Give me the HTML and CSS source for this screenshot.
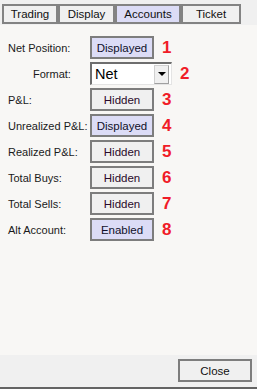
FILE: index.html
```html
<!DOCTYPE html>
<html lang="en">
<head>
  <meta charset="UTF-8">
  <title>Account Settings</title>
  <meta name="viewport" content="width=device-width, initial-scale=1.0">
  <link rel="stylesheet" href="styles.css">
</head>
<body>

  <div class="tabs">
    <div class="tab tab-trading">Trading</div>
    <div class="tab tab-display">Display</div>
    <div class="tab tab-accounts active">Accounts</div>
    <div class="tab tab-ticket">Ticket</div>
  </div>

  <div class="content">
    <div class="row">
      <span class="label">Net Position:</span>
      <button class="toggle on">Displayed</button>
      <span class="num">1</span>
    </div>

    <div class="row">
      <span class="label sub">Format:</span>
      <div class="select">
        <span class="select-value">Net</span>
        <span class="select-arrow"><span class="tri"></span></span>
      </div>
      <span class="num">2</span>
    </div>

    <div class="row">
      <span class="label">P&amp;L:</span>
      <button class="toggle">Hidden</button>
      <span class="num">3</span>
    </div>

    <div class="row">
      <span class="label">Unrealized P&amp;L:</span>
      <button class="toggle on">Displayed</button>
      <span class="num">4</span>
    </div>

    <div class="row">
      <span class="label">Realized P&amp;L:</span>
      <button class="toggle">Hidden</button>
      <span class="num">5</span>
    </div>

    <div class="row">
      <span class="label">Total Buys:</span>
      <button class="toggle">Hidden</button>
      <span class="num">6</span>
    </div>

    <div class="row">
      <span class="label">Total Sells:</span>
      <button class="toggle">Hidden</button>
      <span class="num">7</span>
    </div>

    <div class="row">
      <span class="label">Alt Account:</span>
      <button class="toggle on">Enabled</button>
      <span class="num">8</span>
    </div>
  </div>

  <div class="footer">
    <button class="close-btn">Close</button>
  </div>

</body>
</html>
```

FILE: styles.css
```css
* { box-sizing: border-box; margin: 0; padding: 0; }

body {
  width: 257px;
  height: 389px;
  background: #f8f7f5;
  font-family: "Liberation Sans", Arial, sans-serif;
  font-size: 11.5px;
  color: #1a1a1a;
  display: flex;
  flex-direction: column;
  overflow: hidden;
}

/* tab strip */
.tabs {
  display: flex;
  height: 25px;
  padding: 4px 0 0 2px;
  background: #f0f0f0;
}

.tab {
  height: 20px;
  border: 2px solid #838383;
  background: #f0f0f0;
  display: flex;
  align-items: center;
  justify-content: center;
  color: #101010;
}

.tab-trading { width: 56px; }
.tab-display { width: 57px; }
.tab-accounts { width: 66px; }
.tab-ticket { width: 60px; }

.tab.active { background: #dcdcf6; }

/* settings rows */
.content {
  flex: 1;
  padding: 11px 0 0 8px;
  display: flex;
  flex-direction: column;
  gap: 3px;
}

.row {
  display: flex;
  align-items: center;
  height: 23px;
}

.label {
  width: 82px;
  font-size: 11px;
  white-space: nowrap;
}

.label.sub { padding-left: 25px; }

.toggle {
  width: 64px;
  height: 23px;
  border: 2px solid #7d7d7d;
  background: #f0f0f0;
  font-family: inherit;
  font-size: 11.5px;
  color: #2a0a2a;
}

.toggle.on {
  background: #dcdcf6;
  color: #10102a;
}

.num {
  margin-left: 8px;
  font-weight: bold;
  font-size: 17px;
  color: #f01c28;
}

/* combo box */
.select {
  width: 82px;
  height: 23px;
  display: flex;
  align-items: center;
  background: #fff;
  border-top: 2px solid #6e6e6e;
  border-left: 2px solid #6e6e6e;
  border-right: 1px solid #e4e4e4;
  border-bottom: 1px solid #e4e4e4;
}

.select-value {
  flex: 1;
  padding-left: 3px;
  font-size: 14.5px;
  color: #000;
}

.select-arrow {
  width: 15px;
  height: 19px;
  margin-right: 2px;
  background: #f0f0f0;
  border: 1px solid #d0d0d0;
  border-right-color: #a0a0a0;
  border-bottom-color: #a0a0a0;
  display: flex;
  align-items: center;
  justify-content: center;
}

.tri {
  width: 0;
  height: 0;
  border-left: 4px solid transparent;
  border-right: 4px solid transparent;
  border-top: 4px solid #000;
}

/* bottom bar */
.footer {
  height: 34px;
  background: #f0f0f0;
  border-bottom: 2px solid #646464;
  display: flex;
  justify-content: flex-end;
  padding: 4px 5px 0 0;
}

.close-btn {
  width: 74px;
  height: 23px;
  border: 2px solid #7d7d7d;
  background: #f0f0f0;
  font-family: inherit;
  font-size: 11.5px;
  color: #101010;
}
```
